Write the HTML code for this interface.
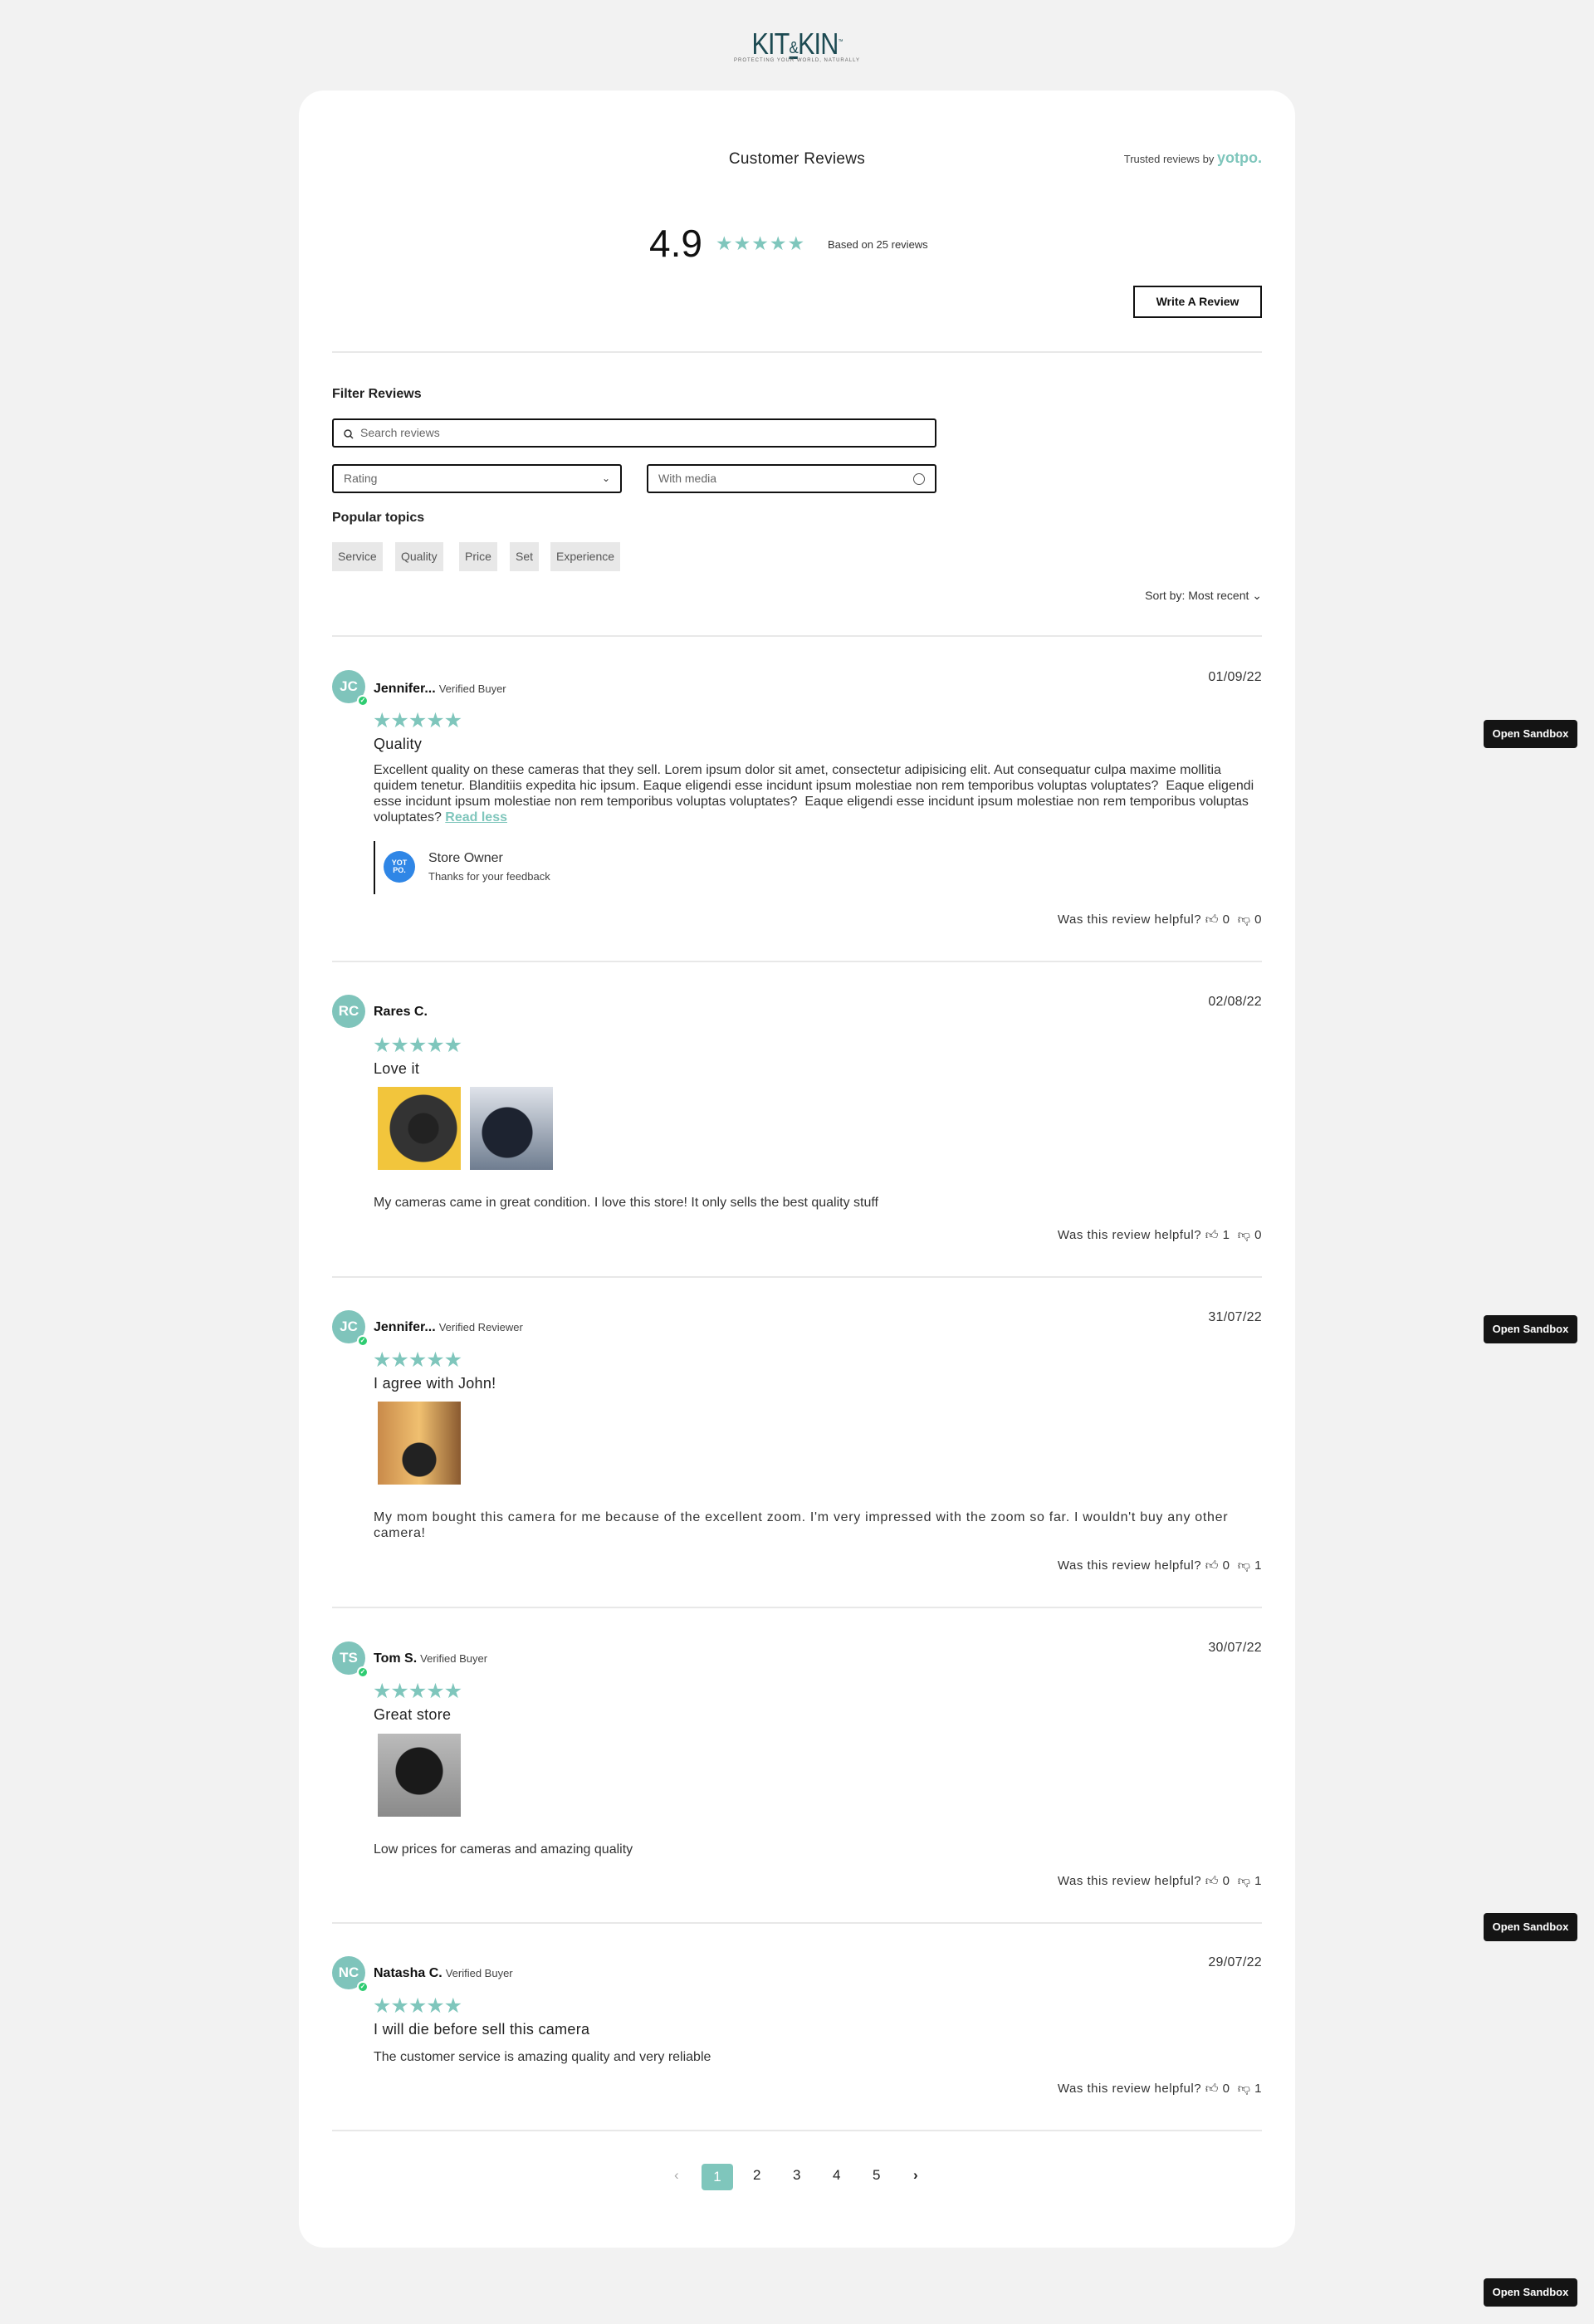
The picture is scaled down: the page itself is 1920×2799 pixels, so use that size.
<!DOCTYPE html>
<html><head><meta charset="utf-8"><style>
*{box-sizing:border-box;margin:0;padding:0}
body{width:1920px;height:2799px;background:#f2f2f2;font-family:"Liberation Sans",sans-serif;color:#222;position:relative;overflow:hidden}
.abs{position:absolute}
.card{position:absolute;left:360px;top:109px;width:1200px;height:2598px;background:#fff;border-radius:30px}
.star{color:#7fc6bc}
.hr{position:absolute;left:400px;width:1120px;height:2px;background:#e8e8e8}
.box{position:absolute;border:2px solid #111;border-radius:3px;height:35px;font-size:14px;color:#666;line-height:31px;padding-left:12px}
.chip{position:absolute;top:653px;height:35px;background:#e8e8e8;font-size:14px;color:#555;line-height:35px;padding:0 7px}
.av{position:absolute;left:400px;width:40px;height:40px;border-radius:50%;background:#7fc4bb;color:#fff;font-weight:bold;font-size:17px;text-align:center;line-height:40px}
.chk{position:absolute;right:-4px;bottom:-4px;width:14px;height:14px;border-radius:50%;background:#2ecc71;border:2px solid #fff;font-size:8px;line-height:10px}
.name{position:absolute;left:450px;font-size:16px;font-weight:bold;color:#111}
.name span{font-weight:normal;font-size:13px;color:#444;margin-left:4px}
.date{position:absolute;right:400px;font-size:16px;color:#333;letter-spacing:.3px}
.stars{position:absolute;left:449px;font-size:25px;color:#7fc6bc;letter-spacing:-1px;line-height:26px}
.title{position:absolute;left:450px;font-size:18px;color:#222;letter-spacing:.3px}
.body{position:absolute;left:450px;width:1070px;font-size:16px;line-height:19px;color:#333}
.help{position:absolute;right:400px;font-size:15px;color:#333;letter-spacing:.5px}
.img{position:absolute;width:100px;height:100px}
.sb{position:absolute;left:1787px;width:113px;height:34px;background:#141414;border-radius:4px;color:#fff;font-size:13px;font-weight:bold;text-align:center;line-height:34px}
.pg{position:absolute;top:2610px;font-size:17px;color:#222}
</style></head><body>
<div class="abs" style="left:880px;top:34px;width:160px;text-align:center;color:#1c4a52;font-size:36px;line-height:34px;letter-spacing:-1px;transform:scaleX(.85)">KIT<span style="display:inline-block;font-size:20px;line-height:20px;border-bottom:3px solid #1c4a52;vertical-align:1px">&amp;</span>KIN<sup style="font-size:7px">™</sup></div>
<div class="abs" style="left:0;width:1920px;top:70px;text-align:center;font-size:6px;color:#666;letter-spacing:1px">PROTECTING YOUR WORLD, NATURALLY</div>
<div class="card"></div>
<div class="abs" style="left:0;width:1920px;top:181px;text-align:center;font-size:19px;color:#222;letter-spacing:.3px">Customer Reviews</div>
<div class="abs" style="right:400px;top:180px;font-size:13px;color:#444">Trusted reviews by <b style="color:#7fc6bc;font-size:18px">yotpo.</b></div>
<div class="abs" style="left:782px;top:266px;font-size:46px;color:#111">4.9</div>
<div class="abs star" style="left:862px;top:280px;font-size:23px;letter-spacing:1px">★★★★★</div>
<div class="abs" style="left:997px;top:287px;font-size:13px;color:#333">Based on 25 reviews</div>
<div class="abs" style="left:1365px;top:344px;width:155px;height:39px;border:2px solid #111;font-size:14px;font-weight:bold;text-align:center;line-height:35px;color:#111">Write A Review</div>
<div class="hr" style="top:423px"></div>
<div class="abs" style="left:400px;top:466px;font-size:16px;font-weight:bold;color:#222">Filter Reviews</div>
<div class="box" style="left:400px;top:504px;width:728px;padding-left:32px">Search reviews<svg class="abs" style="left:12px;top:11px" width="12" height="12" viewBox="0 0 12 12"><circle cx="5" cy="5" r="4" fill="none" stroke="#333" stroke-width="1.5"/><path d="M8 8l3 3" stroke="#333" stroke-width="1.5"/></svg></div>
<div class="box" style="left:400px;top:559px;width:349px">Rating<span class="abs" style="right:12px;top:0;color:#333;font-size:12px">⌄</span></div>
<div class="box" style="left:779px;top:559px;width:349px">With media<span class="abs" style="right:12px;top:9px;width:14px;height:14px;border:1.5px solid #555;border-radius:50%"></span></div>
<div class="abs" style="left:400px;top:615px;font-size:16px;font-weight:bold;color:#222">Popular topics</div>
<div class="chip" style="left:400px">Service</div>
<div class="chip" style="left:476px">Quality</div>
<div class="chip" style="left:553px">Price</div>
<div class="chip" style="left:614px">Set</div>
<div class="chip" style="left:663px">Experience</div>
<div class="abs" style="right:400px;top:709px;font-size:14px;color:#333">Sort by: Most recent ⌄</div>
<div class="hr" style="top:765px"></div>

<div class="av" style="top:807px">JC<div class="chk">✓</div></div>
<div class="name" style="top:821px">Jennifer...<span>Verified Buyer</span></div>
<div class="date" style="top:807px">01/09/22</div>
<div class="stars" style="top:855px">★★★★★</div>
<div class="title" style="top:886px">Quality</div>
<div class="body" style="top:918px">Excellent quality on these cameras that they sell. Lorem ipsum dolor sit amet, consectetur adipisicing elit. Aut consequatur culpa maxime mollitia quidem tenetur. Blanditiis expedita hic ipsum. Eaque eligendi esse incidunt ipsum molestiae non rem temporibus voluptas voluptates?&nbsp; Eaque eligendi esse incidunt ipsum molestiae non rem temporibus voluptas voluptates?&nbsp; Eaque eligendi esse incidunt ipsum molestiae non rem temporibus voluptas voluptates? <b style="color:#7fc6bc;text-decoration:underline">Read less</b></div>
<div class="abs" style="left:450px;top:1013px;width:2px;height:64px;background:#111"></div>
<div class="abs" style="left:462px;top:1025px;width:38px;height:38px;border-radius:50%;background:#2f86e6;color:#fff;font-size:9px;font-weight:bold;text-align:center;line-height:9px;padding-top:10px">YOT<br>PO.</div>
<div class="abs" style="left:516px;top:1025px;font-size:16px;color:#333">Store Owner</div>
<div class="abs" style="left:516px;top:1048px;font-size:13px;color:#444">Thanks for your feedback</div>
<div class="help" style="top:1099px">Was this review helpful? 👍︎ 0 &nbsp;👎︎ 0</div>
<div class="hr" style="top:1157px"></div>

<div class="av" style="top:1198px">RC</div>
<div class="name" style="top:1210px">Rares C.</div>
<div class="date" style="top:1198px">02/08/22</div>
<div class="stars" style="top:1246px">★★★★★</div>
<div class="title" style="top:1277px">Love it</div>
<div class="img" style="left:455px;top:1309px;background:radial-gradient(circle at 55% 50%,#222 0 18px,#333 19px 40px,transparent 41px),#f2c53c"></div>
<div class="img" style="left:566px;top:1309px;background:radial-gradient(circle at 45% 55%,#1d2330 0 30px,transparent 31px),linear-gradient(#dfe3ea,#6f7d90)"></div>
<div class="body" style="top:1439px">My cameras came in great condition. I love this store! It only sells the best quality stuff</div>
<div class="help" style="top:1479px">Was this review helpful? 👍︎ 1 &nbsp;👎︎ 0</div>
<div class="hr" style="top:1537px"></div>

<div class="av" style="top:1578px">JC<div class="chk">✓</div></div>
<div class="name" style="top:1590px">Jennifer...<span>Verified Reviewer</span></div>
<div class="date" style="top:1578px">31/07/22</div>
<div class="stars" style="top:1625px">★★★★★</div>
<div class="title" style="top:1656px">I agree with John!</div>
<div class="img" style="left:455px;top:1688px;background:radial-gradient(circle at 50% 70%,#222 0 20px,transparent 21px),linear-gradient(90deg,#c98a4a,#f0c070,#8a5a30)"></div>
<div class="body" style="top:1818px;letter-spacing:.7px">My mom bought this camera for me because of the excellent zoom. I'm very impressed with the zoom so far. I wouldn't buy any other camera!</div>
<div class="help" style="top:1877px">Was this review helpful? 👍︎ 0 &nbsp;👎︎ 1</div>
<div class="hr" style="top:1935px"></div>

<div class="av" style="top:1977px">TS<div class="chk">✓</div></div>
<div class="name" style="top:1989px">Tom S.<span>Verified Buyer</span></div>
<div class="date" style="top:1976px">30/07/22</div>
<div class="stars" style="top:2024px">★★★★★</div>
<div class="title" style="top:2055px">Great store</div>
<div class="img" style="left:455px;top:2088px;background:radial-gradient(circle at 50% 45%,#1a1a1a 0 28px,transparent 29px),linear-gradient(#bbb,#8a8a8a)"></div>
<div class="body" style="top:2218px">Low prices for cameras and amazing quality</div>
<div class="help" style="top:2257px">Was this review helpful? 👍︎ 0 &nbsp;👎︎ 1</div>
<div class="hr" style="top:2315px"></div>

<div class="av" style="top:2356px">NC<div class="chk">✓</div></div>
<div class="name" style="top:2368px">Natasha C.<span>Verified Buyer</span></div>
<div class="date" style="top:2355px">29/07/22</div>
<div class="stars" style="top:2403px">★★★★★</div>
<div class="title" style="top:2434px">I will die before sell this camera</div>
<div class="body" style="top:2468px">The customer service is amazing quality and very reliable</div>
<div class="help" style="top:2507px">Was this review helpful? 👍︎ 0 &nbsp;👎︎ 1</div>
<div class="hr" style="top:2565px"></div>

<div class="pg" style="left:812px;color:#aaa">‹</div>
<div class="abs" style="left:845px;top:2606px;width:38px;height:32px;border-radius:4px;background:#7fc6bc;color:#fff;font-size:17px;text-align:center;line-height:32px">1</div>
<div class="pg" style="left:907px">2</div>
<div class="pg" style="left:955px">3</div>
<div class="pg" style="left:1003px">4</div>
<div class="pg" style="left:1051px">5</div>
<div class="pg" style="left:1100px;font-weight:bold">›</div>

<div class="sb" style="top:867px">Open Sandbox</div>
<div class="sb" style="top:1584px">Open Sandbox</div>
<div class="sb" style="top:2304px">Open Sandbox</div>
<div class="sb" style="top:2744px">Open Sandbox</div>
</body></html>
